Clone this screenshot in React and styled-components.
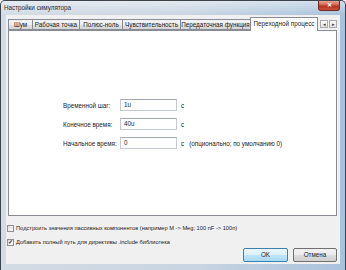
import React from "react";
import styled, { createGlobalStyle } from "styled-components";

const GlobalStyle = createGlobalStyle`
  html, body {
    margin: 0;
    padding: 0;
    background: #ffffff;
  }
  body {
    font-family: "Liberation Sans", Arial, sans-serif;
    font-size: 6.3px;
    color: #1c1c1c;
  }
`;

const tabs = [
  { title: "Шум", width: 24 },
  { title: "Рабочая точка", width: 47 },
  { title: "Полюс-ноль", width: 43 },
  { title: "Чувствительность", width: 58 },
  { title: "Передаточная функция", width: 70 },
  { title: "Переходной процесс", width: 68, active: true },
];

const fields = [
  { label: "Временной шаг:", value: "1u" },
  { label: "Конечное время:", value: "40u" },
  { label: "Начальное время:", value: "0", note: "(опционально; по умолчанию 0)" },
];

const App = () => {
  return (
    <>
      <GlobalStyle />
      <Window>
        <TitleBar>
          <Title>Настройки симулятора</Title>
          <CloseButton>✕</CloseButton>
        </TitleBar>
        <Client>
          <TabRow>
            {tabs.map((tab) => (
              <Tab key={tab.title} $width={tab.width} $active={tab.active}>
                {tab.title}
              </Tab>
            ))}
            <Arrows>
              <ArrowButton>◂</ArrowButton>
              <ArrowButton>▸</ArrowButton>
            </Arrows>
          </TabRow>
          <Panel>
            <Form>
              {fields.map((f) => (
                <React.Fragment key={f.label}>
                  <Label>{f.label}</Label>
                  <Input>{f.value}</Input>
                  <Unit>с</Unit>
                  <Note>{f.note}</Note>
                </React.Fragment>
              ))}
            </Form>
          </Panel>
          <Footer>
            <Checks>
              <CheckRow>
                <CheckBox />
                Подстроить значения пассивных компонентов (например M -&gt; Meg; 100 nF -&gt; 100n)
              </CheckRow>
              <CheckRow>
                <CheckBox $checked>✓</CheckBox>
                Добавить полный путь для директивы .include библиотека
              </CheckRow>
            </Checks>
            <Buttons>
              <Button $default>OK</Button>
              <Button>Отмена</Button>
            </Buttons>
          </Footer>
        </Client>
      </Window>
    </>
  );
};

export default App;

const Window = styled.div`
  width: 346px;
  height: 270px;
  box-sizing: border-box;
  border: 1px solid #3d434a;
  border-bottom: none;
  border-radius: 5px 5px 0 0;
  background: linear-gradient(to right, #d3dbe4 0%, #c9d5e2 55%, #a9c2dc 100%);
  display: flex;
  flex-direction: column;
  overflow: hidden;
`;

const TitleBar = styled.div`
  height: 14px;
  flex-shrink: 0;
  display: flex;
  justify-content: space-between;
  align-items: flex-start;
  padding: 0 5px 0 3px;
  background: linear-gradient(to bottom, rgba(255, 255, 255, 0.45), rgba(255, 255, 255, 0));
`;

const Title = styled.div`
  line-height: 13px;
  font-size: 6.3px;
  color: #1e2a36;
`;

const CloseButton = styled.div`
  width: 22px;
  height: 10px;
  flex-shrink: 0;
  box-sizing: border-box;
  border: 1px solid #6e2a22;
  border-top: none;
  border-radius: 0 0 3px 3px;
  background: linear-gradient(to bottom, #e9a595 0%, #d0614d 45%, #b8301e 55%, #c9533e 100%);
  color: #ffffff;
  font-size: 6px;
  font-weight: 700;
  line-height: 9px;
  text-align: center;
`;

const Client = styled.div`
  flex: 1;
  margin: 0 5px 6px 5px;
  padding: 2px 3px 0 2px;
  background: #f0f0f0;
  display: flex;
  flex-direction: column;
  min-height: 0;
`;

const TabRow = styled.div`
  display: flex;
  align-items: flex-end;
  height: 13px;
  flex-shrink: 0;
  position: relative;
  z-index: 1;
`;

const Tab = styled.div`
  width: ${(p) => p.$width}px;
  flex-shrink: 0;
  height: ${(p) => (p.$active ? 14 : 11)}px;
  box-sizing: border-box;
  border: 1px solid #898c95;
  border-right: ${(p) => (p.$active ? "1px solid #898c95" : "none")};
  border-bottom: ${(p) => (p.$active ? "none" : "1px solid #898c95")};
  margin-bottom: ${(p) => (p.$active ? -1 : 0)}px;
  background: ${(p) =>
    p.$active
      ? "#ffffff"
      : "linear-gradient(to bottom, #f4f4f4 0%, #ececec 50%, #e0e0e0 50%, #d6d6d6 100%)"};
  line-height: ${(p) => (p.$active ? 11 : 9)}px;
  text-align: center;
  white-space: nowrap;
  overflow: hidden;
`;

const Arrows = styled.div`
  display: flex;
  margin-left: 2px;
  align-self: center;
`;

const ArrowButton = styled.div`
  width: 8px;
  height: 8px;
  box-sizing: border-box;
  border: 1px solid #a9abb2;
  background: linear-gradient(to bottom, #fbfbfb, #e4e4e4);
  font-size: 5px;
  line-height: 6px;
  text-align: center;
  color: #333;
  & + & {
    margin-left: 1px;
  }
`;

const Panel = styled.div`
  height: 186px;
  flex-shrink: 0;
  box-sizing: border-box;
  border: 1px solid #898c95;
  background: #ffffff;
  padding: 68px 0 0 54px;
`;

const Form = styled.div`
  display: grid;
  grid-template-columns: 57px 57px auto auto;
  grid-auto-rows: 12px;
  row-gap: 7px;
  align-items: center;
  justify-content: start;
`;

const Label = styled.div`
  white-space: nowrap;
`;

const Input = styled.div`
  height: 12px;
  box-sizing: border-box;
  border: 1px solid #c5c9d0;
  border-top-color: #a3a7ae;
  padding-left: 3px;
  line-height: 10px;
  background: #ffffff;
`;

const Unit = styled.div`
  margin-left: 4px;
`;

const Note = styled.div`
  margin-left: 5px;
  white-space: nowrap;
`;

const Footer = styled.div`
  flex: 1;
  display: flex;
  justify-content: space-between;
  align-items: flex-start;
  padding-bottom: 2px;
`;

const Checks = styled.div`
  display: flex;
  flex-direction: column;
  padding-top: 5px;
  min-width: 0;
  font-size: 5.7px;
`;

const CheckRow = styled.div`
  display: flex;
  align-items: center;
  height: 14px;
  white-space: nowrap;
`;

const CheckBox = styled.span`
  width: 7px;
  height: 7px;
  flex-shrink: 0;
  box-sizing: border-box;
  margin: 0 2px 0 -1px;
  border: 1px solid #8e8f8f;
  background: linear-gradient(to bottom right, #dcdcdc, #fafafa);
  font-size: 6px;
  line-height: 5px;
  text-align: center;
  color: #2b3b55;
  font-weight: 700;
`;

const Buttons = styled.div`
  align-self: flex-end;
  flex-shrink: 0;
  display: flex;
  gap: 5px;
`;

const Button = styled.div`
  width: ${(p) => (p.$default ? 45 : 44)}px;
  height: 14px;
  box-sizing: border-box;
  border: 1px solid ${(p) => (p.$default ? "#3c7fb1" : "#707070")};
  border-radius: 2px;
  background: ${(p) =>
    p.$default
      ? "linear-gradient(to bottom, #eaf6fd 0%, #d9f0fc 50%, #bee6fd 50%, #a7d9f5 100%)"
      : "linear-gradient(to bottom, #f2f2f2 0%, #ebebeb 50%, #dddddd 50%, #cfcfcf 100%)"};
  line-height: 12px;
  text-align: center;
`;
